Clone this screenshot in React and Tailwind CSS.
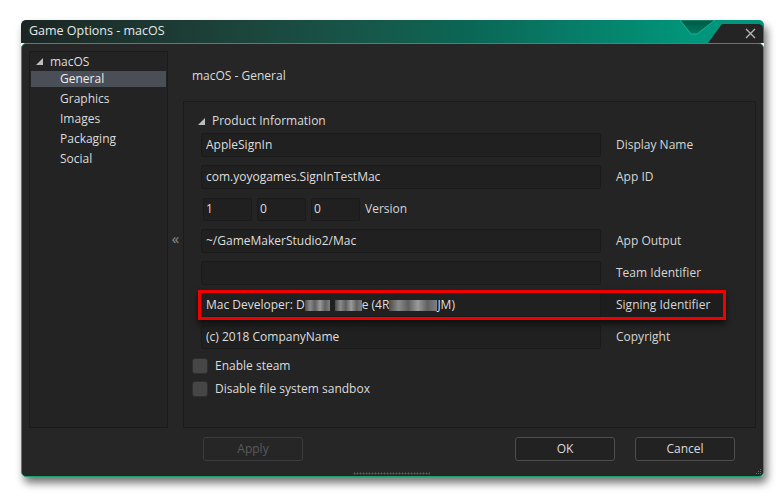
import React from 'react';

const fields = [
  { value: 'AppleSignIn', label: 'Display Name' },
  { value: 'com.yoyogames.SignInTestMac', label: 'App ID' },
  { version: true },
  { value: '~/GameMakerStudio2/Mac', label: 'App Output' },
  { value: '', label: 'Team Identifier' },
  { signing: true, label: 'Signing Identifier' },
  { value: '(c) 2018 CompanyName', label: 'Copyright' },
];

const treeItems = ['Graphics', 'Images', 'Packaging', 'Social'];

const Blur = ({ w }) => (
  <span
    className="inline-block h-[11px] align-[-1px] bg-[linear-gradient(90deg,#4a4a4a,#8a8a8a_20%,#5e5e5e_40%,#9a9a9a_60%,#606060_80%,#808080)] blur-[0.6px]"
    style={{ width: w }}
  />
);

const Field = ({ children }) => (
  <div className="w-[400px] h-[24px] bg-[#202020] border border-[#1a1a1a] rounded-[2px] pl-[4px] flex items-center text-[#dedede] whitespace-nowrap">
    {children}
  </div>
);

const Checkbox = ({ label }) => (
  <div className="flex items-center gap-[7px] h-[23px]">
    <div className="w-[16px] h-[16px] rounded-[3px] bg-[#464646] border border-[#2e2e2e]" />
    <span className="text-[#dcdcdc]">{label}</span>
  </div>
);

const Button = ({ children, disabled }) => (
  <div
    className={`w-[100px] h-[24px] rounded-[3px] border flex items-center justify-center ${
      disabled ? 'border-[#3c3c3c] text-[#5a5a5a]' : 'border-[#4e4e4e] bg-[#222222] text-[#dcdcdc]'
    }`}
  >
    {children}
  </div>
);

export default function App() {
  return (
    <div
      className="w-[784px] h-[498px] bg-white pl-[21px] pt-[20px] text-[12px] leading-none"
      style={{ fontFamily: '"Open Sans", "Noto Sans", sans-serif' }}
    >
      <div className="w-[743px] h-[457px] flex flex-col rounded-[5px] shadow-[3px_6px_8px_rgba(0,0,0,0.55)]">
        {/* title bar */}
        <div className="relative h-[23px] shrink-0 rounded-t-[5px] bg-gradient-to-r from-[#1b2624] via-[#0a6655] via-60% to-[#00967b] to-90% flex items-center pl-[8px]">
          <span className="text-[#e8e8e8] text-[12.5px]">Game Options - macOS</span>
          <svg className="absolute left-0 top-0" width="743" height="23" viewBox="0 0 743 23">
            <defs>
              <linearGradient id="notch" x1="0" y1="0" x2="0" y2="1">
                <stop offset="0" stopColor="#005845" />
                <stop offset="1" stopColor="#00785f" />
              </linearGradient>
            </defs>
            <polygon points="659,0 694,0 676,14 670,14" fill="url(#notch)" stroke="#2bb894" strokeWidth="0.8" />
            <path d="M701,4 L737,4 Q742,4 742,9 L742,23 L687,23 Z" fill="#242424" />
            <path d="M725,9 L734,18 M734,9 L725,18" stroke="#b4b4b4" strokeWidth="1.4" />
          </svg>
        </div>

        {/* body */}
        <div className="relative flex-1 flex flex-col bg-[#262626] border border-[#17a06c] rounded-[5px]">
          <div className="flex pl-[7px] pr-[7px] pt-[7px] h-[384px]">
            {/* tree */}
            <div className="w-[139px] h-[377px] bg-[#232323] border border-[#1b1b1b] pl-[1px] pr-[1px]">
              <div className="h-[19px] flex items-center pl-[5px] text-[#dcdcdc]">
                <svg width="7" height="7" viewBox="0 0 7 7" className="mr-[7px]">
                  <polygon points="7,0 7,7 0,7" fill="#bdbdbd" />
                </svg>
                macOS
              </div>
              <div className="h-[16px] flex items-center pl-[29px] bg-[#4a4f57] text-[#ececec]">General</div>
              <div className="mt-[2px]">
                {treeItems.map((t) => (
                  <div key={t} className="h-[20px] flex items-center pl-[29px] text-[#dcdcdc]">
                    {t}
                  </div>
                ))}
              </div>
            </div>

            {/* collapse */}
            <div className="w-[15px] h-[377px] flex items-center justify-center text-[#8c8c8c] text-[15px] pb-[2px]">
              «
            </div>

            {/* right column */}
            <div className="flex-1 flex flex-col">
              <div className="h-[50px] flex items-center pl-[9px] text-[#dcdcdc]">macOS - General</div>
              <div className="h-[327px] bg-[#242424] border border-[#1b1b1b] pl-[17px] pt-[9px]">
                <div className="h-[20px] flex items-center -ml-[3px] text-[#dcdcdc]">
                  <svg width="7" height="7" viewBox="0 0 7 7" className="mr-[7px]">
                    <polygon points="7,0 7,7 0,7" fill="#bdbdbd" />
                  </svg>
                  Product Information
                </div>
                <div className="mt-[2px] flex flex-col gap-[8px]">
                  {fields.map((f, i) => {
                    if (f.version) {
                      return (
                        <div key={i} className="h-[24px] flex items-center ml-[2px] gap-[5px]">
                          {['1', '0', '0'].map((v, j) => (
                            <div
                              key={j}
                              className="w-[49px] h-[23px] bg-[#202020] border border-[#1a1a1a] rounded-[2px] pl-[2px] flex items-center text-[#dedede]"
                            >
                              {v}
                            </div>
                          ))}
                          <span className="text-[#d6d6d6]">Version</span>
                        </div>
                      );
                    }
                    if (f.signing) {
                      return (
                        <div key={i} className="relative h-[24px] flex items-center gap-[15px]">
                          <div className="absolute -left-[3px] -top-[3px] w-[528px] h-[30px] bg-[#1d1d1d] border-[3px] border-[#f20000] shadow-[0_4px_6px_rgba(0,0,0,0.6)]" />
                          <div className="relative">
                            <Field>
                              Mac Developer: D<Blur w={25} />
                              <span className="w-[5px]" />
                              <Blur w={27} />e (4R<Blur w={48} />JM)
                            </Field>
                          </div>
                          <span className="relative text-[#d6d6d6]">{f.label}</span>
                        </div>
                      );
                    }
                    return (
                      <div key={i} className="h-[24px] flex items-center gap-[15px]">
                        <Field>{f.value}</Field>
                        <span className="text-[#d6d6d6]">{f.label}</span>
                      </div>
                    );
                  })}
                </div>
                <div className="mt-[5px] -ml-[9px] flex flex-col">
                  <Checkbox label="Enable steam" />
                  <Checkbox label="Disable file system sandbox" />
                </div>
              </div>
            </div>
          </div>

          {/* buttons */}
          <div className="flex items-start pt-[9px] pl-[181px] pr-[28px]">
            <Button disabled>Apply</Button>
            <div className="flex-1" />
            <Button>OK</Button>
            <div className="w-[20px]" />
            <Button>Cancel</Button>
          </div>

          <div className="absolute bottom-[1px] left-[331px] w-[77px] h-[3px] bg-[radial-gradient(#5a5a5a_45%,transparent_50%)] bg-[length:3px_3px]" />
          <svg className="absolute right-[1px] bottom-[1px]" width="8" height="8" viewBox="0 0 8 8">
            <rect x="6" y="2" width="1" height="1" fill="#6a6a6a" />
            <rect x="4" y="4" width="1" height="1" fill="#6a6a6a" />
            <rect x="6" y="4" width="1" height="1" fill="#6a6a6a" />
            <rect x="2" y="6" width="1" height="1" fill="#6a6a6a" />
            <rect x="4" y="6" width="1" height="1" fill="#6a6a6a" />
            <rect x="6" y="6" width="1" height="1" fill="#6a6a6a" />
          </svg>
        </div>
      </div>
    </div>
  );
}
